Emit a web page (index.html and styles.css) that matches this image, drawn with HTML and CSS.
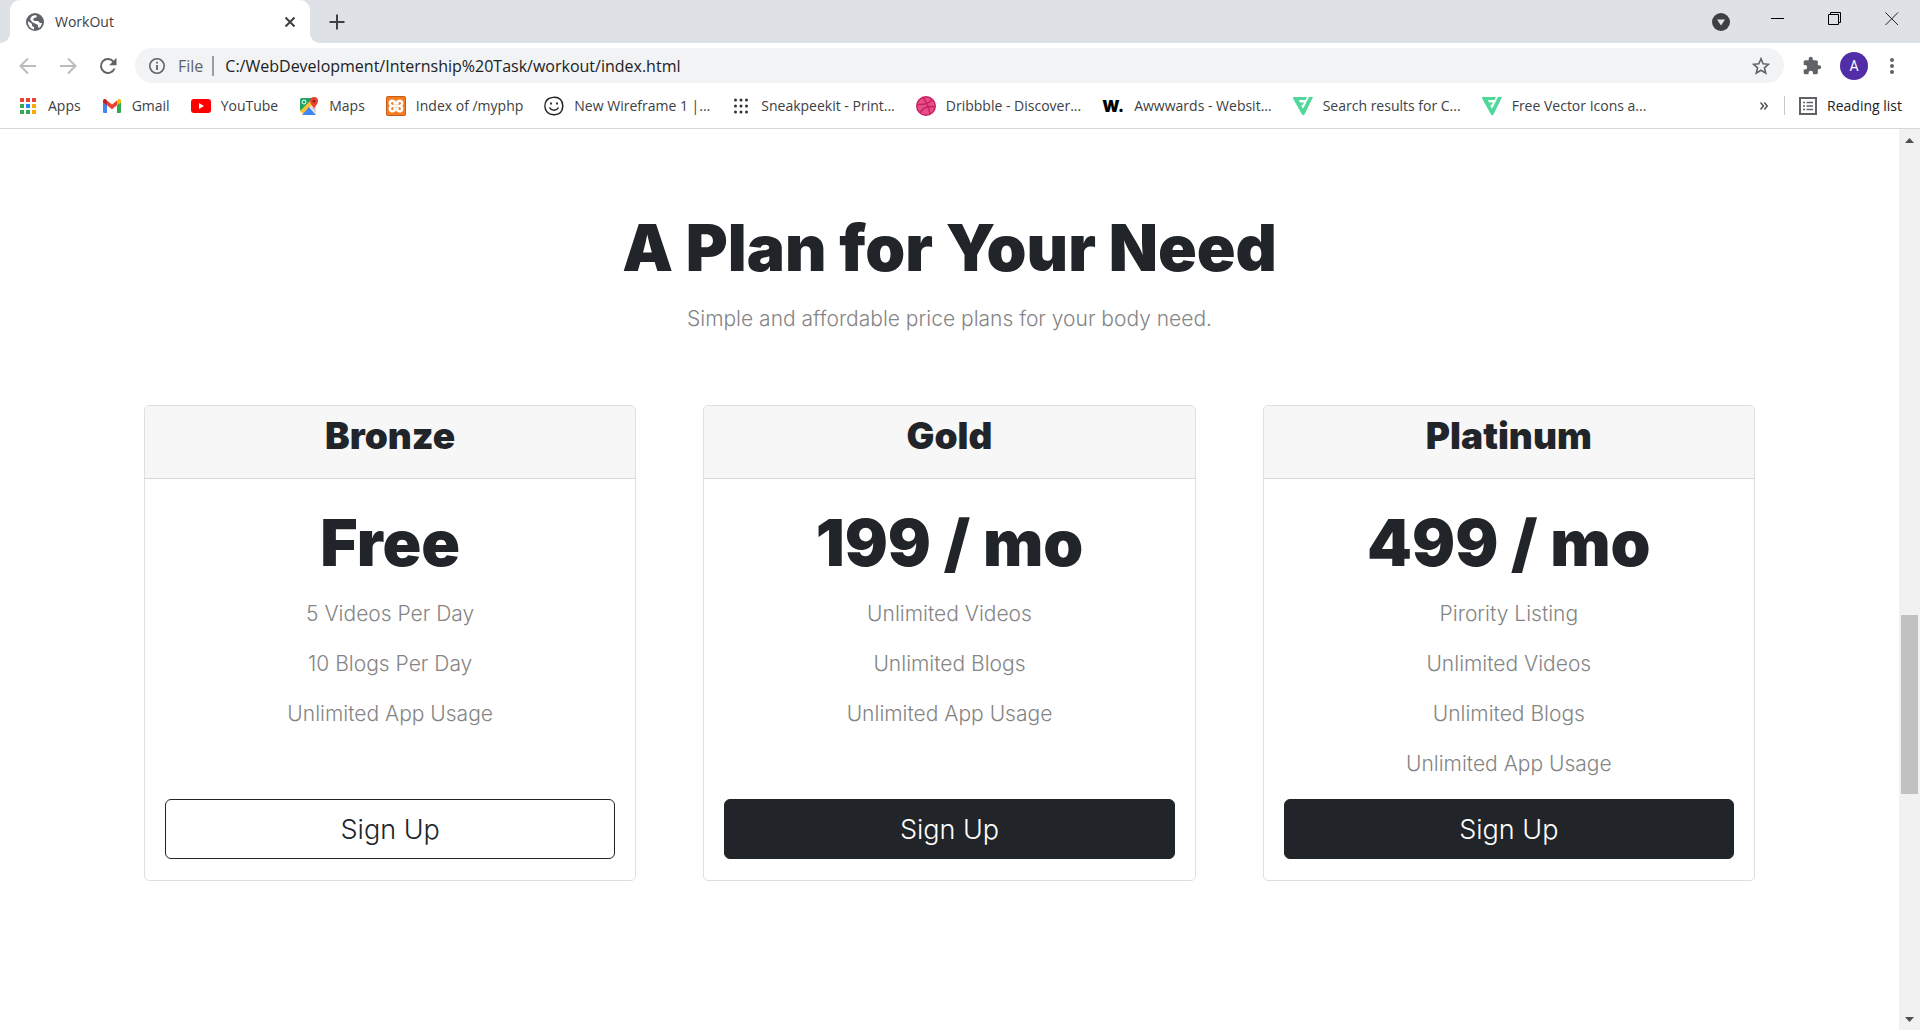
FILE: index.html
```html
<!DOCTYPE html>
<html lang="en">
<head>
<meta charset="utf-8">
<title>WorkOut</title>
<link rel="stylesheet" href="styles.css">
</head>
<body>
<header class="browser">
  <div class="tabstrip">
    <div class="tab">
      <svg class="tab-icon" viewBox="0 0 18 18"><circle cx="9" cy="9" r="9" fill="#5f6368"/><path d="M2 8l4 3v2l2 1v2.500a7.500 7.500 0 0 1-6-8.500zM10 2l1 2-3 1-1 2 2 1h3l2 2h2l-1 3-2 2-1-1v-2l-2-1-4-2-2-3 2-3z" fill="#fff"/></svg>
      <span class="tab-title">WorkOut</span>
      <button class="icon-button" aria-label="Close tab"><svg width="12" height="12" viewBox="0 0 12 12"><path d="M1.500 1.500l9 9M10.500 1.500l-9 9" stroke="#3c4043" stroke-width="2"/></svg></button>
    </div>
    <button class="icon-button new-tab" aria-label="New tab"><svg width="16" height="16" viewBox="0 0 16 16"><path d="M8 .5v15M.5 8h15" stroke="#3c4043" stroke-width="2"/></svg></button>
    <div class="window-controls">
      <button class="icon-button" aria-label="Search tabs"><svg width="18" height="18" viewBox="0 0 18 18"><circle cx="9" cy="9" r="9" fill="#3c4043"/><path d="M5 6.500h8L9 12.500z" fill="#dee1e6"/></svg></button>
      <button class="icon-button" aria-label="Minimize"><svg width="14" height="14" viewBox="0 0 14 14"><path d="M0 6.500h13" stroke="#000"/></svg></button>
      <button class="icon-button" aria-label="Restore"><svg width="14" height="14" viewBox="0 0 14 14" fill="none" stroke="#000"><path d="M.5 2.500h10v10H.5zM2.500 2.500v-2h10v10h-2"/></svg></button>
      <button class="icon-button" aria-label="Close window"><svg width="14" height="14" viewBox="0 0 14 14"><path d="M.5 .5l12.500 12.500M13 .5L.5 13" stroke="#222"/></svg></button>
    </div>
  </div>
  <div class="toolbar">
    <div class="nav-buttons">
      <button class="icon-button" aria-label="Back"><svg width="18" height="18" viewBox="0 0 18 18" fill="none" stroke="#babcbe" stroke-width="2"><path d="M17 9H2M9 1.500L1.500 9 9 16.500"/></svg></button>
      <button class="icon-button" aria-label="Forward"><svg width="18" height="18" viewBox="0 0 18 18" fill="none" stroke="#babcbe" stroke-width="2"><path d="M1 9h15M9 1.500L16.500 9 9 16.500"/></svg></button>
      <button class="icon-button" aria-label="Reload"><svg width="18" height="18" viewBox="0 0 18 18"><path d="M15.500 11.500a7 7 0 1 1-.8-6.500" fill="none" stroke="#5f6368" stroke-width="2"/><path d="M17.500.8v7.400h-7.300z" fill="#5f6368"/></svg></button>
    </div>
    <div class="omnibox">
      <svg class="info" viewBox="0 0 16 16"><circle cx="8" cy="8" r="7.200" fill="none" stroke="#5f6368" stroke-width="1.600"/><path d="M8 7v5M8 3.800v1.800" stroke="#5f6368" stroke-width="1.800"/></svg>
      <span class="scheme">File</span>
      <input class="url" type="text" aria-label="Address" value="C:/WebDevelopment/Internship%20Task/workout/index.html">
      <button class="icon-button" aria-label="Bookmark this page"><svg width="18" height="18" viewBox="0 0 18 18"><path d="M9 1.800l2.100 5 5.400.5-4.100 3.500 1.300 5.300L9 13.300l-4.700 2.800 1.300-5.300-4.100-3.500 5.400-.5z" fill="none" stroke="#5f6368" stroke-width="1.600"/></svg></button>
    </div>
    <div class="toolbar-actions">
      <button class="icon-button" aria-label="Extensions"><svg width="20" height="20" viewBox="0 0 24 24" fill="#5f6368"><path d="M20.500 11H19V7a2 2 0 0 0-2-2h-4V3.500a2.500 2.500 0 0 0-5 0V5H4a2 2 0 0 0-2 2v3.800h1.500a2.700 2.700 0 0 1 0 5.400H2V20a2 2 0 0 0 2 2h3.800v-1.500a2.700 2.700 0 0 1 5.400 0V22H17a2 2 0 0 0 2-2v-4h1.500a2.500 2.500 0 0 0 0-5z"/></svg></button>
      <button class="avatar" aria-label="Profile">A</button>
      <button class="icon-button" aria-label="Menu"><svg width="4" height="18" viewBox="0 0 4 18" fill="#5f6368"><circle cx="2" cy="3" r="2"/><circle cx="2" cy="9" r="2"/><circle cx="2" cy="15" r="2"/></svg></button>
    </div>
  </div>
  <nav class="bookmarks" aria-label="Bookmarks">
    <a class="bookmark" href="#"><svg viewBox="0 0 20 20"><path fill="#ea4335" d="M2 2h4v4H2zM8 2h4v4H8zM14 2h4v4h-4z"/><path fill="#34a853" d="M2 8h4v4H2zM2 14h4v4H2z"/><path fill="#1a8cf0" d="M8 8h4v4H8z"/><path fill="#34a853" d="M8 14h4v4H8z"/><path fill="#fbaa05" d="M14 8h4v4h-4zM14 14h4v4h-4z"/></svg><span>Apps</span></a>
    <a class="bookmark" href="#"><svg viewBox="0 0 20 20"><path fill="#4285f4" d="M1 6l4 3v8H2a1 1 0 0 1-1-1z"/><path fill="#34a853" d="M15 9l4-3v10a1 1 0 0 1-1 1h-3z"/><path fill="#ea4335" d="M5 4.500l5 4 5-4v4.800l-5 4-5-4z"/><path fill="#c5221f" d="M1 5c0-2 2-2.500 3-1.500l1 1v4.800L1 6.500z"/><path fill="#fbbc04" d="M19 5c0-2-2-2.500-3-1.500l-1 1v4.800l4-2.800z"/></svg><span>Gmail</span></a>
    <a class="bookmark" href="#"><svg viewBox="0 0 20 20"><rect y="3" width="20" height="14" rx="3" fill="#f00"/><path d="M8 7l5 3-5 3z" fill="#fff"/></svg><span>YouTube</span></a>
    <a class="bookmark" href="#"><svg viewBox="0 0 20 20"><path fill="#1da261" d="M3 2h12L2 16z"/><path fill="#1da261" d="M1 4a2 2 0 0 1 2-2h11L1 15z"/><path fill="#fbc02d" d="M1 15L13 3l3 3L4 18z"/><path fill="#4285f4" d="M3 19l7-8 7 8z"/><path fill="#d7dade" d="M11 11l6-5v12z"/><circle cx="5" cy="6" r="2" fill="none" stroke="#fff"/><path fill="#ea4335" d="M15 14c0-4-4-5-4-9a4 4 0 0 1 8 0c0 4-4 5-4 9z"/><circle cx="15" cy="5" r="1.500" fill="#8d2018"/></svg><span>Maps</span></a>
    <a class="bookmark" href="#"><svg viewBox="0 0 20 20"><rect width="20" height="20" rx="2" fill="#c95b16"/><rect x="1" y="1" width="18" height="18" rx="1" fill="#f57c20"/><path d="M8.500 5.500C6 4 3.500 5 3.800 7.500c.1 1.200.9 2 2 2.500-1.100.5-1.900 1.300-2 2.500C3.500 15 6 16 8.500 14.500V12.500h3v2c2.500 1.500 5 .5 4.700-2-.1-1.200-.9-2-2-2.500 1.100-.5 1.900-1.300 2-2.500C16.500 5 14 4 11.500 5.500v2h-3z" fill="none" stroke="#fff" stroke-width="2.500"/><path d="M6 10h8" stroke="#fff" stroke-width="2"/></svg><span>Index of /myphp</span></a>
    <a class="bookmark" href="#"><svg viewBox="0 0 20 20" fill="none" stroke="#222" stroke-width="1.500"><path d="M2.500 4.500C5 1 13 0 16.500 3.500S19 14 16.500 16.500 7 20 3.500 16.500.5 8 2.500 4.500z"/><path d="M5.500 11.500c2 3.500 7 3.500 9 0"/><path d="M7 6.500v2M13 6.500v2" stroke-width="1.800"/></svg><span>New Wireframe 1 |...</span></a>
    <a class="bookmark" href="#"><svg viewBox="0 0 20 20" fill="#333"><circle cx="4.500" cy="4" r="1.500"/><circle cx="10" cy="4" r="1.500"/><circle cx="15.500" cy="4" r="1.500"/><circle cx="4.500" cy="10" r="1.500"/><circle cx="10" cy="10" r="1.500"/><circle cx="15.500" cy="10" r="1.500"/><circle cx="4.500" cy="16" r="1.500"/><circle cx="10" cy="16" r="1.500"/><circle cx="15.500" cy="16" r="1.500"/></svg><span>Sneakpeekit - Print...</span></a>
    <a class="bookmark" href="#"><svg viewBox="0 0 20 20"><circle cx="10" cy="10" r="9.300" fill="#ea4c89" stroke="#c32361" stroke-width="1.400"/><path d="M7 1.500c4 5 6 10 7 16.500M1 8.500c7 .5 12-1 15.500-5M4 17c3-5.500 8-7.500 15-6" fill="none" stroke="#c32361" stroke-width="1.400"/></svg><span>Dribbble - Discover...</span></a>
    <a class="bookmark" href="#"><b class="w-logo">W.</b><span>Awwwards - Websit...</span></a>
    <a class="bookmark" href="#"><svg viewBox="0 0 20 20" fill="#4fd89a"><path d="M0 1h14l-1.500 3H6l1 2.500h4L9.700 9H8.200l1.300 3.500L15.500 1H20l-8.500 17.500c-.5 1-2 1-2.500 0L.3 3z"/><path d="M15.500 1L10 12" stroke="#fff"/></svg><span>Search results for C...</span></a>
    <a class="bookmark" href="#"><svg viewBox="0 0 20 20" fill="#4fd89a"><path d="M0 1h14l-1.500 3H6l1 2.500h4L9.700 9H8.200l1.300 3.500L15.500 1H20l-8.500 17.500c-.5 1-2 1-2.500 0L.3 3z"/><path d="M15.500 1L10 12" stroke="#fff"/></svg><span>Free Vector Icons a...</span></a>
    <div class="bookmarks-end">
      <button class="icon-button" aria-label="More bookmarks"><svg width="8" height="8" viewBox="0 0 8 8" fill="none" stroke="#4d5156" stroke-width="1.500"><path d="M.5 .5L3.500 4l-3 3.500M4.300 .5l3 3.500-3 3.500"/></svg></button>
      <a class="bookmark reading" href="#"><svg viewBox="0 0 18 18" fill="none" stroke="#5f6368" stroke-width="2"><rect x="1" y="1" width="16" height="16"/><path d="M4 5.500h2M4 9h2M4 12.500h2M7.500 5.500H14M7.500 9H14M7.500 12.500H14" stroke-width="1.500"/></svg><span>Reading list</span></a>
    </div>
  </nav>
</header>
<div class="viewport">
  <main class="pricing">
    <h1>A Plan for Your Need</h1>
    <p>Simple and affordable price plans for your body need.</p>
    <div class="plans">
      <section class="card">
        <h2>Bronze</h2>
        <div class="card-body">
          <h3>Free</h3>
          <p>5 Videos Per Day</p>
          <p>10 Blogs Per Day</p>
          <p>Unlimited App Usage</p>
          <button class="signup outline" type="button">Sign Up</button>
        </div>
      </section>
      <section class="card">
        <h2>Gold</h2>
        <div class="card-body">
          <h3>199 / mo</h3>
          <p>Unlimited Videos</p>
          <p>Unlimited Blogs</p>
          <p>Unlimited App Usage</p>
          <button class="signup" type="button">Sign Up</button>
        </div>
      </section>
      <section class="card">
        <h2>Platinum</h2>
        <div class="card-body">
          <h3>499 / mo</h3>
          <p>Pirority Listing</p>
          <p>Unlimited Videos</p>
          <p>Unlimited Blogs</p>
          <p>Unlimited App Usage</p>
          <button class="signup" type="button">Sign Up</button>
        </div>
      </section>
    </div>
  </main>
  <div class="scrollbar" aria-hidden="true">
    <svg viewBox="0 0 21 21"><path d="M6 14l4.500-5 4.500 5z" fill="#505050"/></svg>
    <div class="track"><div class="before"></div><div class="thumb"></div><div class="after"></div></div>
    <svg viewBox="0 0 21 21"><path d="M6 8l4.500 5L15 8z" fill="#505050"/></svg>
  </div>
</div>
</body>
</html>
```
FILE: styles.css
```css
* { box-sizing: border-box; }

body {
  margin: 0;
  min-height: 100vh;
  display: flex;
  flex-direction: column;
  background: #fff;
  color: #212529;
  font-family: Inter, "Liberation Sans", sans-serif;
}

svg { display: block; flex: none; }
button { font: inherit; cursor: pointer; }

.icon-button {
  padding: 0;
  border: 0;
  background: none;
  display: flex;
  flex: none;
}

/* Browser chrome */
.browser {
  font-family: "Open Sans", "Noto Sans", sans-serif;
  font-size: 14px;
  border-bottom: 1px solid #d5d7da;
}

.tabstrip {
  display: flex;
  align-items: center;
  height: 43px;
  padding: 0 21px 0 10px;
  background: #dee1e6;
}

.tab {
  position: relative;
  display: flex;
  align-items: center;
  gap: 11px;
  width: 300px;
  height: 43px;
  padding: 0 14px 0 16px;
  border-radius: 10px 10px 0 0;
  background: #fff;
  color: #3c4043;
}

.tab::before,
.tab::after {
  content: "";
  position: absolute;
  bottom: 0;
  width: 10px;
  height: 10px;
}
.tab::before { left: -10px; background: radial-gradient(circle at 0 0, #dee1e6 10px, #fff 10px); }
.tab::after { right: -10px; background: radial-gradient(circle at 100% 0, #dee1e6 10px, #fff 10px); }

.tab-icon { width: 18px; height: 18px; }
.tab-title { flex: 1; }
.new-tab { margin-left: 19px; }

.window-controls {
  display: flex;
  align-items: center;
  gap: 43px;
  margin-left: auto;
}
.window-controls .icon-button { margin-bottom: 5px; }
.window-controls .icon-button:first-child { margin-bottom: 0; margin-right: -2px; }

.toolbar {
  display: flex;
  align-items: center;
  gap: 18px;
  height: 45px;
  padding: 0 26px 0 19px;
}
.nav-buttons { display: flex; gap: 22px; }

.omnibox {
  flex: 1;
  display: flex;
  align-items: center;
  height: 35px;
  padding: 0 14px;
  border-radius: 18px;
  background: #f1f3f4;
  font-size: 16px;
}
.info { width: 16px; height: 16px; }
.scheme {
  margin: 0 11px 0 13px;
  padding-right: 9px;
  border-right: 2px solid #9a9da1;
  line-height: 20px;
  color: #5f6368;
}
.url {
  flex: 1;
  padding: 0;
  border: 0;
  outline: 0;
  background: none;
  color: #202124;
  font: inherit;
}

.toolbar-actions { display: flex; align-items: center; gap: 18px; }
.toolbar-actions .icon-button:last-child { margin-left: 4px; }
.avatar {
  width: 28px;
  height: 28px;
  padding: 0;
  border: 0;
  border-radius: 50%;
  background: #512da8;
  color: #fff;
  font: 14px Roboto, sans-serif;
}

.bookmarks {
  display: flex;
  align-items: center;
  gap: 21px;
  height: 40px;
  padding: 0 18px 5px;
}
.bookmark {
  display: flex;
  align-items: center;
  gap: 10px;
  color: #3c4043;
  text-decoration: none;
  white-space: nowrap;
}
.bookmark svg { width: 20px; height: 20px; }
.w-logo { width: 22px; color: #000; font: 900 16px Inter, sans-serif; }
.bookmarks-end {
  display: flex;
  align-items: center;
  gap: 16px;
  margin-left: auto;
}
.reading {
  padding-left: 14px;
  border-left: 1px solid #c8cacd;
  color: #202124;
}
.bookmark.reading svg { width: 18px; height: 18px; }

/* Page */
.viewport { flex: 1; display: flex; }

.pricing {
  flex: 1;
  padding: 83px 144px;
  text-align: center;
}
.pricing h1, .pricing h3 {
  margin: 0;
  font-size: 64px;
  line-height: 72px;
  font-weight: 900;
}
.pricing p {
  margin: 0 0 20px;
  font-size: 21px;
  line-height: 30px;
  font-weight: 300;
  color: #858585;
}
.pricing h1 + p { margin: 20px 0 71px; }

.plans {
  display: grid;
  grid-template-columns: repeat(3, 1fr);
  gap: 67px;
}
.card {
  display: flex;
  flex-direction: column;
  border: 1px solid #dfdfdf;
  border-radius: 5px;
}
.card h2 {
  margin: 0;
  padding: 9px 20px 21px;
  border-bottom: 1px solid #d8d8d8;
  border-radius: 4px 4px 0 0;
  background: #f7f7f7;
  font-size: 37px;
  line-height: 42px;
  font-weight: 900;
}
.card-body {
  flex: 1;
  display: flex;
  flex-direction: column;
  padding: 28px 20px 21px;
}
.card h3 { margin-bottom: 20px; }
.signup {
  margin-top: auto;
  height: 60px;
  border: 1px solid #212529;
  border-radius: 6px;
  background: #212529;
  color: #fff;
  font-size: 27px;
  font-weight: 300;
}
.outline { background: #fff; color: #212529; }

/* Scrollbar */
.scrollbar {
  display: flex;
  flex-direction: column;
  width: 21px;
  background: #f1f1f1;
}
.scrollbar svg { width: 21px; height: 21px; }
.track {
  flex: 1;
  display: flex;
  flex-direction: column;
  padding: 0 2px;
}
.before { flex: 465; }
.thumb { flex: 179; background: #c1c1c1; }
.after { flex: 215; }
```
